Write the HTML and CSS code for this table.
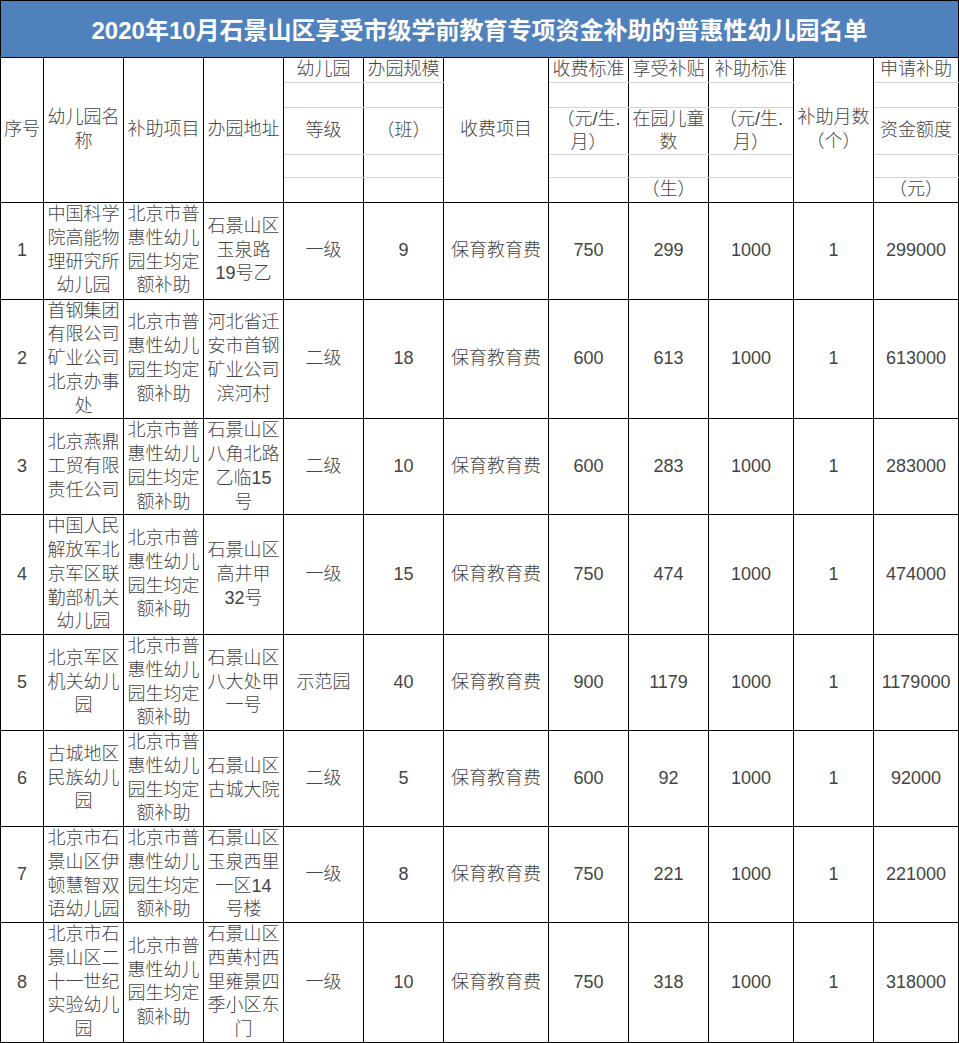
FILE: index.html
```html
<!DOCTYPE html>
<html lang="zh-CN">
<head>
<meta charset="utf-8">
<title>2020年10月石景山区享受市级学前教育专项资金补助的普惠性幼儿园名单</title>
<link rel="stylesheet" href="styles.css">
</head>
<body>
<table class="sheet">
  <colgroup>
    <col class="c-no"><col class="c80"><col class="c80"><col class="c80"><col class="c80"><col class="c80">
    <col class="c105"><col class="c80"><col class="c80"><col class="c85"><col class="c80"><col class="c85">
  </colgroup>
  <tr class="r-title"><td class="title" colspan="12">2020年10月石景山区享受市级学前教育专项资金补助的普惠性幼儿园名单</td></tr>
  <tr class="h1">
    <td class="hd" rowspan="5">序号</td>
    <td class="hd" rowspan="5">幼儿园名<br>称</td>
    <td class="hd" rowspan="5">补助项目</td>
    <td class="hd" rowspan="5">办园地址</td>
    <td class="sub">幼儿园</td>
    <td class="sub">办园规模</td>
    <td class="hd" rowspan="5">收费项目</td>
    <td class="sub">收费标准</td>
    <td class="sub">享受补贴</td>
    <td class="sub">补助标准</td>
    <td class="hd" rowspan="5">补助月数<br>（个）</td>
    <td class="sub">申请补助</td>
  </tr>
  <tr class="h2">
    <td class="sub"></td><td class="sub"></td><td class="sub"></td><td class="sub"></td><td class="sub"></td><td class="sub"></td>
  </tr>
  <tr class="h3">
    <td class="sub">等级</td>
    <td class="sub">（班）</td>
    <td class="sub two">（元/生.<br>月）</td>
    <td class="sub two">在园儿童<br>数</td>
    <td class="sub two">（元/生.<br>月）</td>
    <td class="sub">资金额度</td>
  </tr>
  <tr class="h4">
    <td class="sub"></td><td class="sub"></td><td class="sub"></td><td class="sub"></td><td class="sub"></td><td class="sub"></td>
  </tr>
  <tr class="h5">
    <td class="sub last"></td><td class="sub last"></td><td class="sub last"></td><td class="sub last">（生）</td><td class="sub last"></td><td class="sub last">（元）</td>
  </tr>
  <tr class="row r97">
    <td>1</td><td>中国科学<br>院高能物<br>理研究所<br>幼儿园</td><td>北京市普<br>惠性幼儿<br>园生均定<br>额补助</td><td>石景山区<br>玉泉路<br>19号乙</td>
    <td>一级</td><td>9</td><td>保育教育费</td><td>750</td><td>299</td><td>1000</td><td>1</td><td>299000</td>
  </tr>
  <tr class="row r120">
    <td>2</td><td>首钢集团<br>有限公司<br>矿业公司<br>北京办事<br>处</td><td>北京市普<br>惠性幼儿<br>园生均定<br>额补助</td><td>河北省迁<br>安市首钢<br>矿业公司<br>滨河村</td>
    <td>二级</td><td>18</td><td>保育教育费</td><td>600</td><td>613</td><td>1000</td><td>1</td><td>613000</td>
  </tr>
  <tr class="row r96">
    <td>3</td><td>北京燕鼎<br>工贸有限<br>责任公司</td><td>北京市普<br>惠性幼儿<br>园生均定<br>额补助</td><td>石景山区<br>八角北路<br>乙临15<br>号</td>
    <td>二级</td><td>10</td><td>保育教育费</td><td>600</td><td>283</td><td>1000</td><td>1</td><td>283000</td>
  </tr>
  <tr class="row r120">
    <td>4</td><td>中国人民<br>解放军北<br>京军区联<br>勤部机关<br>幼儿园</td><td>北京市普<br>惠性幼儿<br>园生均定<br>额补助</td><td>石景山区<br>高井甲<br>32号</td>
    <td>一级</td><td>15</td><td>保育教育费</td><td>750</td><td>474</td><td>1000</td><td>1</td><td>474000</td>
  </tr>
  <tr class="row r96">
    <td>5</td><td>北京军区<br>机关幼儿<br>园</td><td>北京市普<br>惠性幼儿<br>园生均定<br>额补助</td><td>石景山区<br>八大处甲<br>一号</td>
    <td>示范园</td><td>40</td><td>保育教育费</td><td>900</td><td>1179</td><td>1000</td><td>1</td><td>1179000</td>
  </tr>
  <tr class="row r96">
    <td>6</td><td>古城地区<br>民族幼儿<br>园</td><td>北京市普<br>惠性幼儿<br>园生均定<br>额补助</td><td>石景山区<br>古城大院</td>
    <td>二级</td><td>5</td><td>保育教育费</td><td>600</td><td>92</td><td>1000</td><td>1</td><td>92000</td>
  </tr>
  <tr class="row r96">
    <td>7</td><td>北京市石<br>景山区伊<br>顿慧智双<br>语幼儿园</td><td>北京市普<br>惠性幼儿<br>园生均定<br>额补助</td><td>石景山区<br>玉泉西里<br>一区14<br>号楼</td>
    <td>一级</td><td>8</td><td>保育教育费</td><td>750</td><td>221</td><td>1000</td><td>1</td><td>221000</td>
  </tr>
  <tr class="row r120">
    <td>8</td><td>北京市石<br>景山区二<br>十一世纪<br>实验幼儿<br>园</td><td>北京市普<br>惠性幼儿<br>园生均定<br>额补助</td><td>石景山区<br>西黄村西<br>里雍景四<br>季小区东<br>门</td>
    <td>一级</td><td>10</td><td>保育教育费</td><td>750</td><td>318</td><td>1000</td><td>1</td><td>318000</td>
  </tr>
</table>
</body>
</html>
```

FILE: styles.css
```css
html, body {
  margin: 0;
  padding: 0;
  background: #ffffff;
}

.sheet {
  border-collapse: collapse;
  table-layout: fixed;
  width: 959px;
  font-family: "Liberation Sans", "Noto Sans CJK SC", sans-serif;
  font-size: 18px;
  line-height: 23.75px;
  font-weight: 300;
  color: #444444;
}

.c-no { width: 43px; }
.c80 { width: 80px; }
.c85 { width: 85px; }
.c105 { width: 105px; }

.sheet td {
  border: 1px solid #000000;
  padding: 0;
  text-align: center;
  vertical-align: middle;
  white-space: nowrap;
  overflow: hidden;
}

.title {
  background: #4f81bd;
  color: #ffffff;
  font-size: 24px;
  font-weight: bold;
  padding-top: 3px !important;
  box-sizing: border-box;
}

.r-title { height: 57px; }
.h1 { height: 23px; }
.h2 { height: 25px; }
.h3 { height: 46px; }
.h4 { height: 23px; }
.h5 { height: 22px; }

.sheet td.sub {
  border-top: 1px solid #d4d4d4;
  border-bottom: 1px solid #d4d4d4;
}

.sheet td.sub.last {
  border-bottom: 1px solid #000000;
}

.sheet td.two {
  line-height: 23px;
}

.r97 { height: 97px; }
.r96 { height: 95px; }
.r120 { height: 119px; }
```
